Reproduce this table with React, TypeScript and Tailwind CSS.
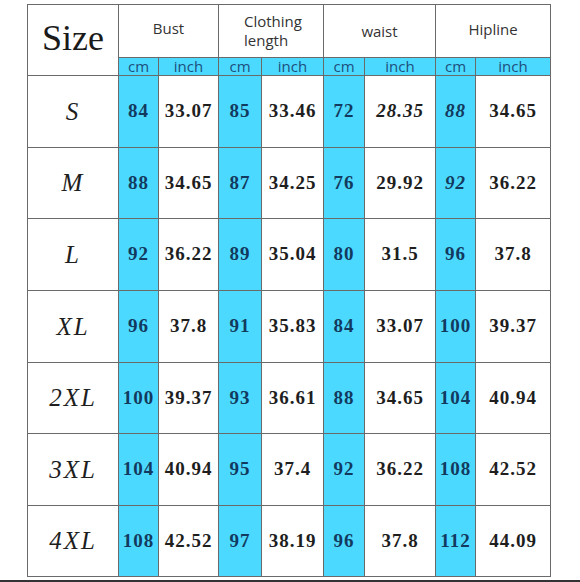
import React from 'react';

type Cell = { v: string; i?: boolean };

const rows: { size: string; vals: Cell[] }[] = [
  { size: 'S', vals: [{ v: '84' }, { v: '33.07' }, { v: '85' }, { v: '33.46' }, { v: '72' }, { v: '28.35', i: true }, { v: '88', i: true }, { v: '34.65' }] },
  { size: 'M', vals: [{ v: '88' }, { v: '34.65' }, { v: '87' }, { v: '34.25' }, { v: '76' }, { v: '29.92' }, { v: '92', i: true }, { v: '36.22' }] },
  { size: 'L', vals: [{ v: '92' }, { v: '36.22' }, { v: '89' }, { v: '35.04' }, { v: '80' }, { v: '31.5' }, { v: '96' }, { v: '37.8' }] },
  { size: 'XL', vals: [{ v: '96' }, { v: '37.8' }, { v: '91' }, { v: '35.83' }, { v: '84' }, { v: '33.07' }, { v: '100' }, { v: '39.37' }] },
  { size: '2XL', vals: [{ v: '100' }, { v: '39.37' }, { v: '93' }, { v: '36.61' }, { v: '88' }, { v: '34.65' }, { v: '104' }, { v: '40.94' }] },
  { size: '3XL', vals: [{ v: '104' }, { v: '40.94' }, { v: '95' }, { v: '37.4' }, { v: '92' }, { v: '36.22' }, { v: '108' }, { v: '42.52' }] },
  { size: '4XL', vals: [{ v: '108' }, { v: '42.52' }, { v: '97' }, { v: '38.19' }, { v: '96' }, { v: '37.8' }, { v: '112' }, { v: '44.09' }] },
];

const units = ['cm', 'inch', 'cm', 'inch', 'cm', 'inch', 'cm', 'inch'];

export default function App() {
  return (
    <div className="w-[580px] h-[582px] bg-white overflow-hidden">
      <div className="pl-[27px] pt-1">
        <div className="grid w-max bg-[#6a6a6a] p-px gap-px grid-cols-[90px_39px_59px_42px_61px_40px_70px_39px_74px] grid-rows-[52px_17px_71px_70px_71px_71px_70px_71px_70px]">
          {/* header */}
          <div className="row-span-2 bg-white flex items-center justify-center pb-1 text-[36px] text-[#1a1a1a] font-['Liberation_Serif','Times_New_Roman',serif]">
            Size
          </div>
          <div className="col-span-2 bg-white flex items-center justify-center pb-1.5 text-[15px] text-[#333] font-['Open_Sans','Noto_Sans',sans-serif]">
            Bust
          </div>
          <div className="col-span-2 bg-white flex flex-col items-start justify-center pl-[25px] text-[15px] leading-[19px] text-[#333] font-['Open_Sans','Noto_Sans',sans-serif]">
            <span>Clothing</span>
            <span>length</span>
          </div>
          <div className="col-span-2 bg-white flex items-center justify-center text-[15px] text-[#333] font-['Open_Sans','Noto_Sans',sans-serif]">
            waist
          </div>
          <div className="col-span-2 bg-white flex items-center justify-center pb-1 text-[15px] text-[#333] font-['Open_Sans','Noto_Sans',sans-serif]">
            Hipline
          </div>
          {units.map((u, k) => (
            <div key={k} className="bg-[#4cd9ff] flex items-center justify-center text-[15px] leading-none text-[#1d4f7c] font-['Open_Sans','Noto_Sans',sans-serif]">
              {u}
            </div>
          ))}
          {/* body */}
          {rows.map((r) => (
            <React.Fragment key={r.size}>
              <div className="bg-white flex items-center justify-center italic text-[25px] tracking-[2px] text-[#1e1e1e] font-['Liberation_Serif','Times_New_Roman',serif]">
                {r.size}
              </div>
              {r.vals.map((c, k) => (
                <div
                  key={k}
                  className={
                    "flex items-center justify-center font-bold text-[19px] tracking-[1px] font-['Liberation_Serif','Times_New_Roman',serif] " +
                    (k % 2 === 0 ? 'bg-[#4cd9ff] text-[#123a5e]' : 'bg-white text-[#1e1e1e]') +
                    (c.i ? ' italic' : '')
                  }
                >
                  {c.v}
                </div>
              ))}
            </React.Fragment>
          ))}
        </div>
      </div>
      <div className="mt-[3px] h-[2px] bg-[#333]" />
    </div>
  );
}
